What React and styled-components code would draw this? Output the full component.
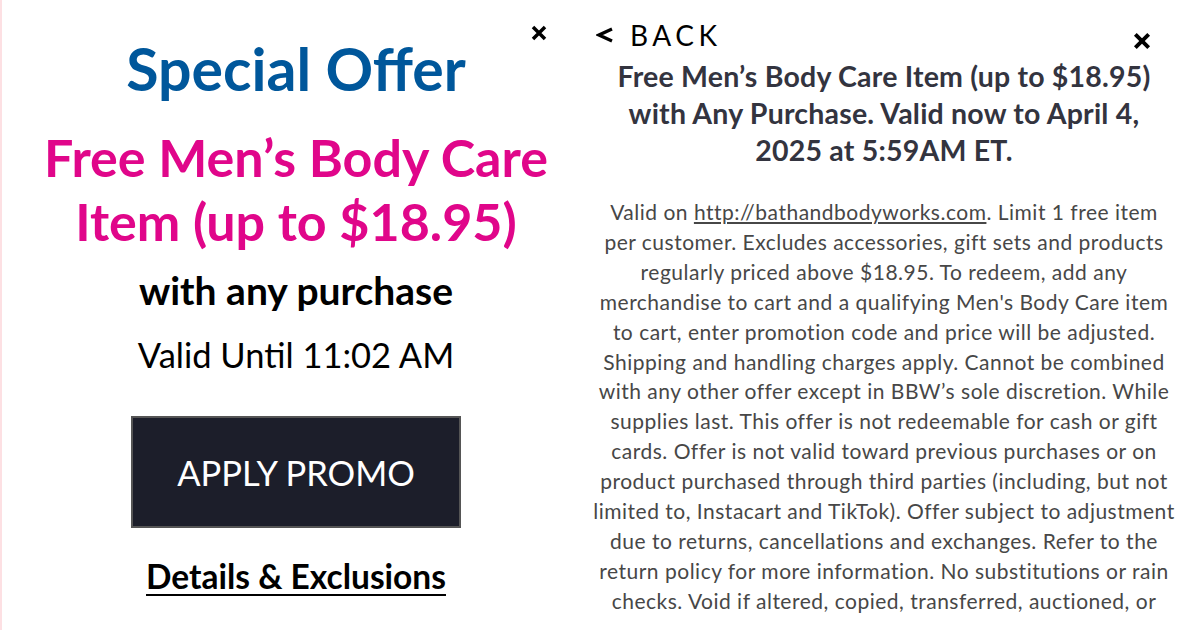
import React from "react";
import styled, { createGlobalStyle } from "styled-components";

const Global = createGlobalStyle`
  html, body { margin: 0; padding: 0; background: #fff; }
  body { font-family: Lato, "Liberation Sans", sans-serif; width: 1200px; height: 630px; overflow: hidden; }
`;

const Page = styled.div`
  display: flex;
  width: 1200px;
  height: 630px;
  border-left: 2px solid #fde0e3;
  box-sizing: border-box;
  overflow: hidden;
`;

const Left = styled.section`
  position: relative;
  width: 588px;
  flex: none;
  display: flex;
  flex-direction: column;
  align-items: center;
  padding-top: 37px;
  box-sizing: border-box;
`;

const CloseBtn = styled.button`
  position: absolute;
  top: ${(p) => p.$top}px;
  right: ${(p) => p.$right}px;
  border: 0;
  background: none;
  padding: 0;
  width: 22px;
  height: 22px;
  display: flex;
  align-items: center;
  justify-content: center;
  cursor: pointer;
`;

const Title = styled.h1`
  margin: 0;
  font-size: 59px;
  font-weight: 700;
  color: #00579b;
  line-height: 64px;
  white-space: nowrap;
`;

const Promo = styled.h2`
  margin: 24px 0 0;
  font-size: 52px;
  font-weight: 700;
  color: #e0068a;
  line-height: 64px;
  text-align: center;
  white-space: nowrap;
`;

const Sub = styled.p`
  margin: 15px 0 0;
  font-size: 39px;
  font-weight: 700;
  color: #000;
  line-height: 44px;
`;

const Valid = styled.p`
  margin: 21px 0 0;
  font-size: 34.5px;
  font-weight: 400;
  color: #000;
  line-height: 44px;
`;

const ApplyBtn = styled.button`
  margin-top: 39px;
  width: 330px;
  height: 112px;
  background: #1c1e2a;
  border: 2px solid #555;
  color: #fff;
  font-family: inherit;
  font-size: 34.5px;
  font-weight: 400;
  cursor: pointer;
`;

const DetailsLink = styled.a`
  margin-top: 28px;
  font-size: 33.5px;
  font-weight: 700;
  color: #000;
  text-decoration: underline;
  text-decoration-thickness: 2px;
  text-underline-offset: 5px;
  line-height: 40px;
`;

const Right = styled.section`
  position: relative;
  flex: 1;
  display: flex;
  flex-direction: column;
  align-items: center;
  padding: 15px 26px 0 4px;
  box-sizing: border-box;
  min-width: 0;
`;

const BackBtn = styled.button`
  align-self: flex-start;
  display: flex;
  align-items: center;
  gap: 16px;
  border: 0;
  background: none;
  padding: 0 0 0 2px;
  font-family: inherit;
  font-size: 28px;
  letter-spacing: 4.5px;
  color: #000;
  line-height: 40px;
  cursor: pointer;
`;

const Heading = styled.h3`
  margin: 2.5px 0 0;
  font-size: 28.5px;
  font-weight: 700;
  letter-spacing: 0.2px;
  color: #33343f;
  line-height: 37px;
  text-align: center;
  white-space: nowrap;
`;

const Body = styled.p`
  margin: 28.5px 0 0;
  font-size: 21px;
  font-weight: 400;
  letter-spacing: 0.5px;
  color: #474747;
  line-height: 29.9px;
  text-align: center;
  a { color: inherit; text-decoration: underline; text-underline-offset: 2px; }
`;

const Line = styled.span`
  display: block;
  white-space: nowrap;
`;

const XIcon = ({ size = 18, stroke = 3.5 }) => (
  <svg width={size} height={size} viewBox="0 0 18 18">
    <path d="M3 3 L15 15 M15 3 L3 15" stroke="#000" strokeWidth={stroke} strokeLinecap="butt" />
  </svg>
);

const Chevron = () => (
  <svg width="18" height="16" viewBox="0 0 18 16">
    <path d="M16 2 L3 8 L16 14" stroke="#000" strokeWidth="3.2" fill="none" />
  </svg>
);

const bodyLines = [
  <>Valid on <a href="#">http://bathandbodyworks.com</a>. Limit 1 free item</>,
  "per customer. Excludes accessories, gift sets and products",
  "regularly priced above $18.95. To redeem, add any",
  "merchandise to cart and a qualifying Men's Body Care item",
  "to cart, enter promotion code and price will be adjusted.",
  "Shipping and handling charges apply. Cannot be combined",
  "with any other offer except in BBW\u2019s sole discretion. While",
  "supplies last. This offer is not redeemable for cash or gift",
  "cards. Offer is not valid toward previous purchases or on",
  "product purchased through third parties (including, but not",
  "limited to, Instacart and TikTok). Offer subject to adjustment",
  "due to returns, cancellations and exchanges. Refer to the",
  "return policy for more information. No substitutions or rain",
  "checks. Void if altered, copied, transferred, auctioned, or",
];

export default function App() {
  return (
    <>
      <Global />
      <Page>
        <Left>
          <CloseBtn $top={22} $right={40} aria-label="Close">
            <XIcon />
          </CloseBtn>
          <Title>Special Offer</Title>
          <Promo>
            Free Men’s Body Care
            <br />
            Item (up to $18.95)
          </Promo>
          <Sub>with any purchase</Sub>
          <Valid>Valid Until 11:02 AM</Valid>
          <ApplyBtn>APPLY PROMO</ApplyBtn>
          <DetailsLink href="#">Details &amp; Exclusions</DetailsLink>
        </Left>
        <Right>
          <CloseBtn $top={30} $right={47} aria-label="Close">
            <XIcon size={20} />
          </CloseBtn>
          <BackBtn>
            <Chevron />
            BACK
          </BackBtn>
          <Heading>
            Free Men’s Body Care Item (up to $18.95)
            <br />
            with Any Purchase. Valid now to April 4,
            <br />
            2025 at 5:59AM ET.
          </Heading>
          <Body>
            {bodyLines.map((l, i) => (
              <Line key={i}>{l}</Line>
            ))}
          </Body>
        </Right>
      </Page>
    </>
  );
}
